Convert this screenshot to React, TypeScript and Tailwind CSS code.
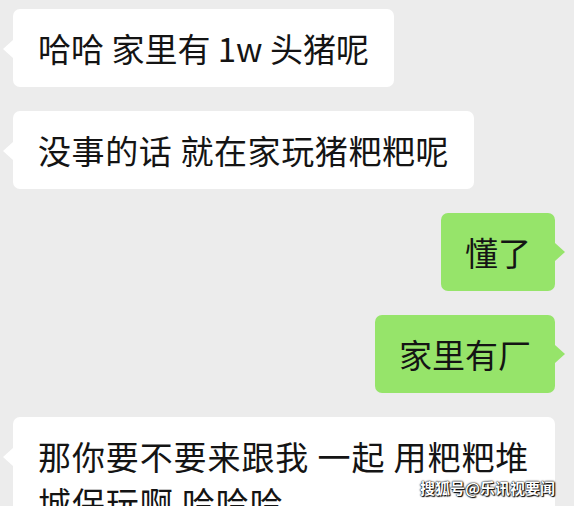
import React from "react";

const font = { fontFamily: '"Noto Sans CJK SC", "Noto Sans", sans-serif' };

function LeftBubble({ children, className = "" }: { children: React.ReactNode; className?: string }) {
  return (
    <div className="flex justify-start pl-[13px]">
      <div className={`relative rounded-[7px] bg-white px-[25px] py-[16px] text-[33px] leading-[46px] text-[#141414] whitespace-nowrap ${className}`}>
        <span className="absolute left-[-10px] top-[31px] h-0 w-0 border-y-[9px] border-r-[10px] border-y-transparent border-r-white" />
        {children}
      </div>
    </div>
  );
}

function RightBubble({ children }: { children: React.ReactNode }) {
  return (
    <div className="flex justify-end pr-[19px]">
      <div className="relative rounded-[7px] bg-[#96e46a] px-[24px] py-[16px] text-[33px] leading-[46px] text-[#141414] whitespace-nowrap">
        <span className="absolute right-[-10px] top-[30px] h-0 w-0 border-y-[9px] border-l-[10px] border-y-transparent border-l-[#96e46a]" />
        {children}
      </div>
    </div>
  );
}

export default function App() {
  return (
    <div className="relative h-[506px] w-[574px] overflow-hidden bg-[#ececec]" style={font}>
      <div className="flex flex-col gap-[24px] pt-[9px]">
        <LeftBubble>哈哈 家里有 1w 头猪呢</LeftBubble>
        <LeftBubble className="tracking-[0.6px]">没事的话 就在家玩猪粑粑呢</LeftBubble>
        <RightBubble>懂了</RightBubble>
        <RightBubble>家里有厂</RightBubble>
        <div className="flex justify-start pl-[13px] pr-[19px]">
          <div className="relative w-full rounded-[7px] bg-white px-[25px] py-[16px] text-[33px] leading-[46px] tracking-[0.9px] text-[#141414] whitespace-nowrap">
            <span className="absolute left-[-10px] top-[31px] h-0 w-0 border-y-[9px] border-r-[10px] border-y-transparent border-r-white" />
            那你要不要来跟我 一起 用粑粑堆
            <br />
            城保玩啊 哈哈哈
          </div>
        </div>
      </div>
      <div className="absolute left-[420px] top-[478px] text-[15px] font-bold leading-[20px] text-white [text-shadow:0_0_2px_#000,0_0_1px_#000,1px_1px_1px_#000]">
        搜狐号@乐讯视要闻
      </div>
    </div>
  );
}
